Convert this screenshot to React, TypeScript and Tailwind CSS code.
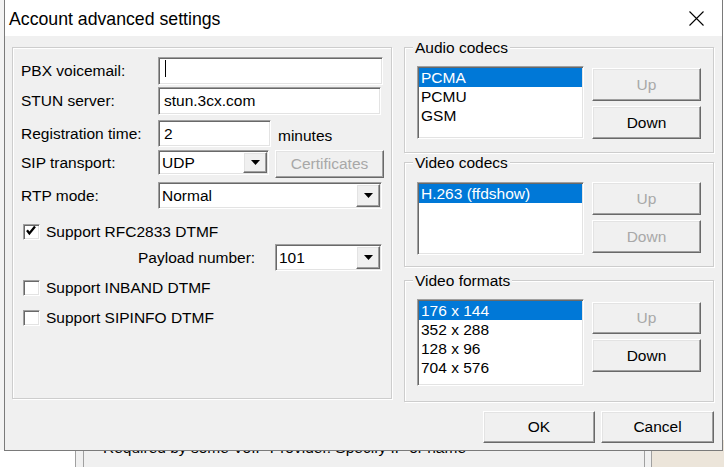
import React from 'react';

const sunken =
  'border border-t-[#a0a0a0] border-l-[#a0a0a0] border-b-white border-r-white shadow-[inset_1px_1px_0_#696969,inset_-1px_-1px_0_#e3e3e3]';
const raised =
  'border border-t-white border-l-white border-b-[#696969] border-r-[#696969] shadow-[inset_-1px_-1px_0_#a0a0a0,inset_1px_1px_0_#e3e3e3] bg-[#f0f0f0]';

const Arrow = () => (
  <svg width="9" height="5" viewBox="0 0 9 5">
    <path d="M0 0 H9 L4.5 5 Z" fill="#000" />
  </svg>
);

interface SelectProps {
  value: string;
  className: string;
}

const Select: React.FC<SelectProps> = ({ value, className }) => (
  <div className={`${sunken} ${className} bg-white flex p-px`}>
    <span className="flex-1 pl-[2px] flex items-center">{value}</span>
    <span className={`${raised} w-[24px] flex items-center justify-center`}>
      <Arrow />
    </span>
  </div>
);

interface ButtonProps {
  label: string;
  disabled?: boolean;
  className: string;
}

const Button: React.FC<ButtonProps> = ({ label, disabled, className }) => (
  <div
    className={`${raised} ${className} flex items-center justify-center ${
      disabled ? 'text-[#a8a8a8]' : 'text-black'
    }`}
  >
    {label}
  </div>
);

const Checkbox: React.FC<{ checked?: boolean; label: string }> = ({ checked, label }) => (
  <div className="flex items-center h-[17px] ml-[2px]">
    <span className={`${sunken} bg-white w-[17px] h-[16px] relative`}>
      {checked && (
        <svg className="absolute left-0 top-0" width="15" height="14" viewBox="0 0 15 14">
          <path d="M3 5.2 L5.4 8.4 L11 1.6" stroke="#000" strokeWidth="2.3" fill="none" />
        </svg>
      )}
    </span>
    <span className="ml-[6px]">{label}</span>
  </div>
);

interface ListProps {
  items: string[];
  className: string;
}

const ListBox: React.FC<ListProps> = ({ items, className }) => (
  <div className={`${sunken} ${className} bg-white p-px`}>
    {items.map((item, i) => (
      <div
        key={item}
        className={`h-[19px] leading-[19px] pl-[2px] whitespace-nowrap ${
          i === 0 ? 'bg-[#0078d7] text-white' : 'text-black'
        }`}
      >
        {item}
      </div>
    ))}
  </div>
);

interface GroupProps {
  title: string;
  className: string;
  children: React.ReactNode;
}

const Group: React.FC<GroupProps> = ({ title, className, children }) => (
  <div className={`relative border border-[#cdcdcd] shadow-[inset_1px_1px_0_#fff,1px_1px_0_#fff] ${className}`}>
    <span className="absolute left-[8px] top-[-9px] px-[2px] bg-[#f0f0f0] leading-[18px]">{title}</span>
    {children}
  </div>
);

export default function App() {
  return (
    <div className="relative w-[724px] h-[467px] overflow-hidden bg-white font-['Liberation_Sans',Arial,sans-serif] text-[15.5px] text-black">
      {/* window behind the dialog */}
      <div className="absolute left-0 top-0 w-[4px] h-[450px] bg-[#f3f3f3]" />
      <div className="absolute left-[75px] top-[440px] w-[570px] h-[27px] bg-[#f0f0f0] border-l border-[#a0a0a0]">
        <div className="ml-[7px] h-full border-l border-[#a0a0a0]" />
      </div>
      <div className="absolute left-[644px] top-[440px] w-[8px] h-[27px] border-l border-r border-[#a0a0a0] bg-[#f0f0f0]" />
      <div className="absolute left-[652px] top-[440px] right-0 h-[27px] bg-[#ece5da]" />
      <div className="absolute left-[103px] top-[439px] leading-[18px] whitespace-nowrap">
        Required by some VoIP Provider. Specify IP or name
      </div>

      {/* dialog */}
      <div className="absolute left-[4px] top-0 z-10 w-[719px] h-[451px] border-l border-r border-b border-[#7a7a7a] bg-[#f0f0f0] flex flex-col">
        <div className="h-[36px] bg-white flex items-center pl-[4px]">
          <span className="text-[17.7px] pt-[3px]">Account advanced settings</span>
          <svg className="ml-auto mr-[18px]" width="15" height="15" viewBox="0 0 15 15">
            <path d="M0.5 0.5 L14.5 14.5 M14.5 0.5 L0.5 14.5" stroke="#000" strokeWidth="1.1" />
          </svg>
        </div>

        <div className="flex flex-col pt-[11px] pl-[7px] pr-[8px]">
          <div className="flex items-start">
            {/* left group */}
            <div className="w-[380px] h-[352px] border border-[#cdcdcd] shadow-[inset_1px_1px_0_#fff,1px_1px_0_#fff] flex flex-col pl-[8px]">
              <div className="mt-[9px] h-[28px] flex items-center">
                <span className="w-[137px] shrink-0">PBX voicemail:</span>
                <div className={`${sunken} w-[225px] h-[28px] bg-white flex items-start pl-[6px] pt-[2px]`}>
                  <span className="w-px h-[17px] bg-black" />
                </div>
              </div>
              <div className="mt-[2px] h-[28px] flex items-center">
                <span className="w-[137px] shrink-0">STUN server:</span>
                <div className={`${sunken} w-[223px] h-[28px] bg-white flex items-center pl-[5px]`}>stun.3cx.com</div>
              </div>
              <div className="mt-[5px] h-[27px] flex items-center">
                <span className="w-[137px] shrink-0">Registration time:</span>
                <div className={`${sunken} w-[113px] h-[27px] bg-white flex items-center pl-[5px]`}>2</div>
                <span className="ml-[7px] pt-[4px]">minutes</span>
              </div>
              <div className="mt-[3px] h-[28px] flex items-start">
                <span className="w-[137px] shrink-0 leading-[25px]">SIP transport:</span>
                <Select value="UDP" className="w-[111px] h-[25px]" />
                <Button label="Certificates" disabled className="ml-[6px] w-[109px] h-[28px]" />
              </div>
              <div className="mt-[4px] h-[27px] flex items-center">
                <span className="w-[137px] shrink-0">RTP mode:</span>
                <Select value="Normal" className="w-[224px] h-[27px]" />
              </div>
              <div className="mt-[14px]">
                <Checkbox checked label="Support RFC2833 DTMF" />
              </div>
              <div className="mt-[4px] h-[27px] flex items-center ml-[117px]">
                <span className="w-[137px] shrink-0">Payload number:</span>
                <Select value="101" className="w-[107px] h-[27px]" />
              </div>
              <div className="mt-[8px]">
                <Checkbox label="Support INBAND DTMF" />
              </div>
              <div className="mt-[13px]">
                <Checkbox label="Support SIPINFO DTMF" />
              </div>
            </div>

            {/* right column */}
            <div className="ml-[12px] w-[310px] flex flex-col">
              <Group title="Audio codecs" className="h-[106px] flex items-start pl-[12px] pt-[18px]">
                <ListBox items={['PCMA', 'PCMU', 'GSM']} className="w-[167px] h-[73px]" />
                <div className="ml-[8px] mt-[2px] flex flex-col gap-[5px]">
                  <Button label="Up" disabled className="w-[109px] h-[33px]" />
                  <Button label="Down" className="w-[109px] h-[33px]" />
                </div>
              </Group>
              <Group title="Video codecs" className="mt-[9px] h-[105px] flex items-start pl-[12px] pt-[19px]">
                <ListBox items={['H.263 (ffdshow)']} className="w-[167px] h-[73px]" />
                <div className="ml-[8px] flex flex-col gap-[5px]">
                  <Button label="Up" disabled className="w-[109px] h-[33px]" />
                  <Button label="Down" disabled className="w-[109px] h-[33px]" />
                </div>
              </Group>
              <Group title="Video formats" className="mt-[13px] h-[122px] flex items-start pl-[12px] pt-[18px]">
                <ListBox
                  items={['176 x 144', '352 x 288', '128 x 96', '704 x 576']}
                  className="w-[167px] h-[87px]"
                />
                <div className="ml-[8px] mt-[3px] flex flex-col gap-[5px]">
                  <Button label="Up" disabled className="w-[109px] h-[32px]" />
                  <Button label="Down" className="w-[109px] h-[33px]" />
                </div>
              </Group>
            </div>
          </div>

          <div className="mt-[9px] flex justify-end gap-[6px]">
            <Button label="OK" className="w-[112px] h-[32px]" />
            <Button label="Cancel" className="w-[113px] h-[32px]" />
          </div>
        </div>
      </div>
    </div>
  );
}
